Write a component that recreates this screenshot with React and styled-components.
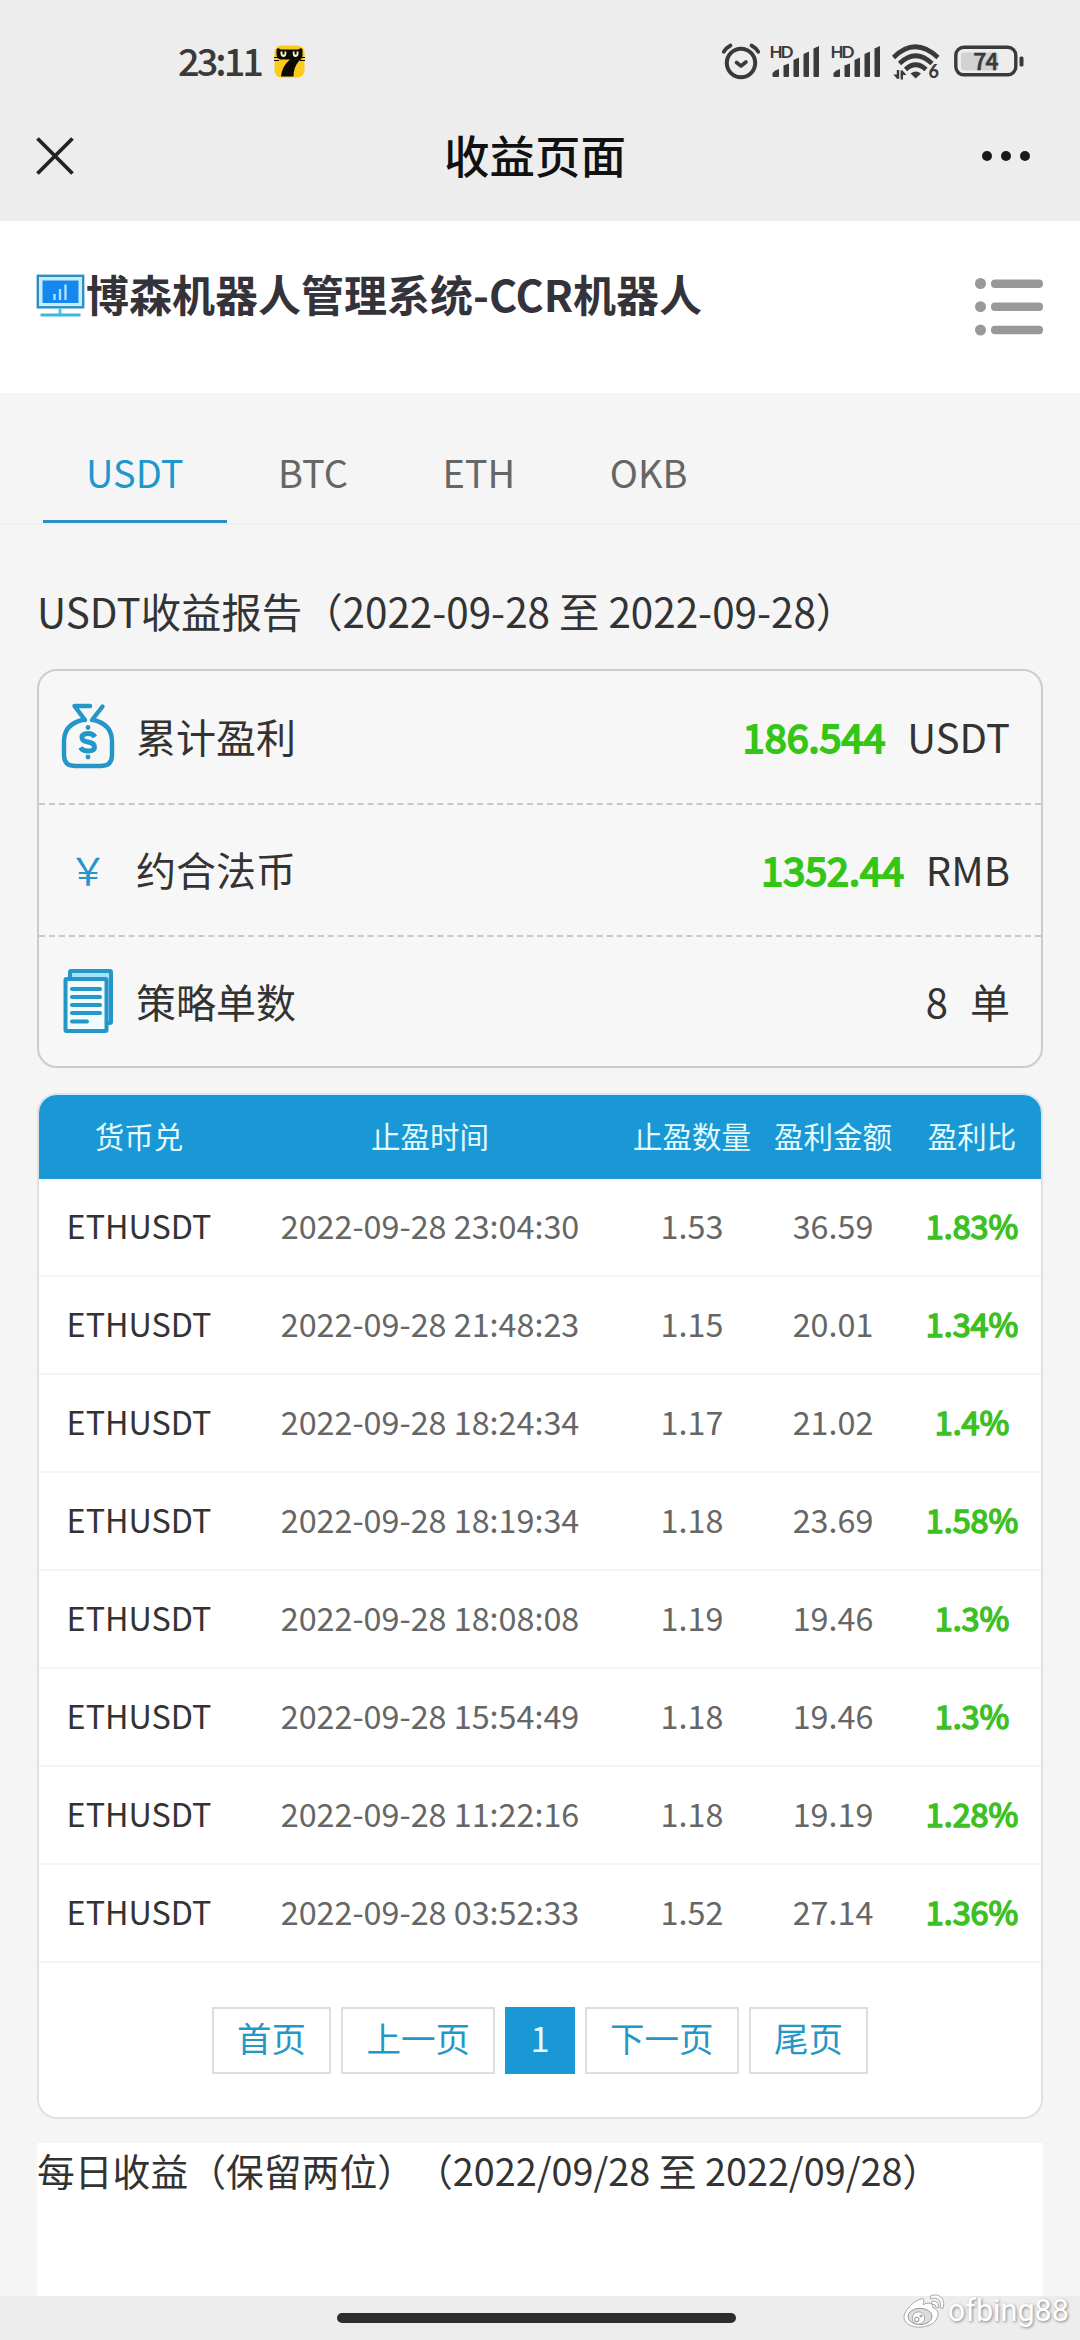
import React from 'react';
import styled, { createGlobalStyle } from 'styled-components';

const trades = [
    { pair: 'ETHUSDT', time: '2022-09-28 23:04:30', amount: '1.53', profit: '36.59', rate: '1.83%' },
    { pair: 'ETHUSDT', time: '2022-09-28 21:48:23', amount: '1.15', profit: '20.01', rate: '1.34%' },
    { pair: 'ETHUSDT', time: '2022-09-28 18:24:34', amount: '1.17', profit: '21.02', rate: '1.4%' },
    { pair: 'ETHUSDT', time: '2022-09-28 18:19:34', amount: '1.18', profit: '23.69', rate: '1.58%' },
    { pair: 'ETHUSDT', time: '2022-09-28 18:08:08', amount: '1.19', profit: '19.46', rate: '1.3%' },
    { pair: 'ETHUSDT', time: '2022-09-28 15:54:49', amount: '1.18', profit: '19.46', rate: '1.3%' },
    { pair: 'ETHUSDT', time: '2022-09-28 11:22:16', amount: '1.18', profit: '19.19', rate: '1.28%' },
    { pair: 'ETHUSDT', time: '2022-09-28 03:52:33', amount: '1.52', profit: '27.14', rate: '1.36%' },
];

const AppBadge = () => (
    <svg width="31" height="33" viewBox="0 0 31 33">
        <rect x="0.5" y="0.5" width="30" height="32" rx="7" fill="#fccb1a" />
        <path d="M2.5 4.5 L4 3 L7 4.5 H24 L27 3 L28.5 4.5 V11 Q28 14 25 16 Q19.5 22 19.5 31.5 H7 Q8 21 16 14.5 H6 Q2.5 13 2.5 9 Z" fill="#0c0a04" />
        <path d="M0 12.5 H4 M0 15.5 H5 M27 12.5 H31 M26 15.5 H31" stroke="#0c0a04" strokeWidth="1.2" />
        <path d="M6.5 6.5 V9 Q7 12 9.5 12 Q12 12 12.3 9 V6.5 M18.8 6.5 V9 Q19 12 21.5 12 Q24 12 24.5 9 V6.5" fill="#fff3c4" />
        <path d="M9.5 5.5 V9.5 M21.6 5.5 V9.5" stroke="#0c0a04" strokeWidth="2" />
    </svg>
);

const AlarmIcon = () => (
    <svg width="40" height="38" viewBox="0 0 40 38" fill="none" stroke="#3a3a3a" strokeLinecap="round">
        <circle cx="20" cy="21" r="14.2" strokeWidth="4" />
        <path d="M2.8 9.8 Q5.5 5.5 9.5 3.5 M37.2 9.8 Q34.5 5.5 30.5 3.5" strokeWidth="3.8" />
        <path d="M15.5 20.5 L20 24 L25 20" strokeWidth="3.6" strokeLinejoin="round" />
    </svg>
);

const SignalIcon = () => (
    <svg width="52" height="34" viewBox="0 0 52 34" fill="#3a3a3a">
        <text x="-0.5" y="13.5" fontFamily="Lato" fontWeight="bold" fontSize="17" textLength="24">HD</text>
        <path d="M2.5 32 V29 Q5 26 9 25 V32 Q9 33 8 33 H3.5 Q2.5 33 2.5 32 Z" />
        <path d="M13.5 21.5 L19 19.5 V32 Q19 33 18 33 H14.5 Q13.5 33 13.5 32 Z" />
        <path d="M23.5 16 L29 13.5 V32 Q29 33 28 33 H24.5 Q23.5 33 23.5 32 Z" />
        <path d="M33.5 10 L39 7.5 V32 Q39 33 38 33 H34.5 Q33.5 33 33.5 32 Z" />
        <path d="M43.5 4.5 L49 2 V32 Q49 33 48 33 H44.5 Q43.5 33 43.5 32 Z" />
    </svg>
);

const WifiIcon = () => (
    <svg width="48" height="37" viewBox="0 0 48 37" fill="none" stroke="#3a3a3a" strokeWidth="4.6">
        <path d="M1.5 14.5 Q23 -7 46 14.5" />
        <path d="M7.5 20.5 Q23.5 5 40 20.5" />
        <path d="M13.5 26.5 Q23.5 17 34 26.5" />
        <path d="M18.5 30.5 Q23.7 26.5 29 30.5 L23.7 35.5 Z" fill="#3a3a3a" stroke="none" />
        <path d="M6 27 V35.8 M9.8 36.5 V27.5" strokeWidth="2.4" />
        <path d="M1.2 31.5 H5.5 V36 Z M10.5 27.5 V32 H14.5 Z" fill="#3a3a3a" stroke="none" />
        <text x="36.5" y="35.3" fill="#3a3a3a" stroke="none" fontFamily="Lato" fontWeight="900" fontSize="18">6</text>
    </svg>
);

const BatteryIcon = () => (
    <svg width="71" height="32" viewBox="0 0 71 32">
        <rect x="7" y="7.5" width="37" height="18" rx="3" fill="#d2d2d2" />
        <rect x="1.8" y="2.3" width="60" height="27.5" rx="8" fill="none" stroke="#3a3a3a" strokeWidth="3.4" />
        <rect x="65.5" y="11.5" width="4" height="10" rx="1.5" fill="#3a3a3a" />
        <text x="31.5" y="24.5" textAnchor="middle" fontFamily="Noto Sans CJK SC" fontWeight="500" fontSize="23" letterSpacing="-0.8" fill="#3a3a3a" stroke="#3a3a3a" strokeWidth="0.6">74</text>
    </svg>
);

const CloseIcon = () => (
    <svg width="38" height="38" viewBox="0 0 38 38" stroke="#222" strokeWidth="3.8">
        <path d="M1.5 1.5 L36.5 36.5 M36.5 1.5 L1.5 36.5" />
    </svg>
);

const MonitorIcon = () => (
    <svg width="47" height="42" viewBox="0 0 47 42">
        <rect x="0.8" y="0.8" width="45.4" height="31.5" fill="#c9ecfb" stroke="#2f8dc4" strokeWidth="2.4" />
        <rect x="5.5" y="5.5" width="36" height="22.5" fill="#1487f0" />
        <path d="M17.5 19 V25 M23 14 V25 M28.5 9.5 V25" stroke="#a9e2ff" strokeWidth="2.4" />
        <path d="M23 33 V39" stroke="#53c8e8" strokeWidth="3" />
        <path d="M3.5 40 H43.5" stroke="#3fb6dc" strokeWidth="2.8" />
    </svg>
);

const MenuIcon = () => (
    <svg width="68" height="58" viewBox="0 0 68 58" fill="#999">
        <circle cx="5.5" cy="5.5" r="5.5" />
        <circle cx="5.5" cy="28.7" r="5.5" />
        <circle cx="5.5" cy="52" r="5.5" />
        <rect x="16" y="1.5" width="52" height="8.4" rx="4" />
        <rect x="16" y="24.6" width="52" height="8.4" rx="4" />
        <rect x="16" y="47.8" width="52" height="8.4" rx="4" />
    </svg>
);

const MoneyBagIcon = () => (
    <svg width="54" height="66" viewBox="0 0 54 66" fill="none" stroke="#2497c8" strokeWidth="4.4">
        <path d="M29 3 H13.5 L24 17 M41.5 3.5 L31 17" strokeLinecap="round" strokeLinejoin="round" />
        <path d="M23 16.5 Q3 21 3 38 V52 Q3 63 14 63 H40 Q51 63 51 52 V38 Q51 21 31 16.5" />
        <circle cx="27" cy="24.5" r="2.4" fill="#2497c8" stroke="none" />
        <circle cx="27" cy="54" r="2.4" fill="#2497c8" stroke="none" />
        <path d="M34 34 Q32 30.5 27 30.5 Q21 30.5 21 34.5 Q21 38 27 39 Q33.5 40 33.5 44 Q33.5 48 27 48 Q21.5 48 19.5 44.5" strokeWidth="5" />
    </svg>
);

const DocsIcon = () => (
    <svg width="50" height="66" viewBox="0 0 50 66" fill="none" stroke="#2497c8" strokeWidth="4">
        <rect x="7" y="3" width="41" height="52" rx="1" fill="#a5e3f9" />
        <rect x="2.5" y="11" width="41" height="52" rx="1" fill="#f1fbfe" />
        <path d="M9 21 H37 M9 29 H37 M9 37 H37 M9 45 H37 M9 53.5 H24" strokeWidth="4" strokeLinecap="round" />
    </svg>
);

const WeiboIcon = () => (
    <svg width="44" height="36" viewBox="0 0 44 36" fill="#fff" stroke="#a8a8a8" strokeWidth="1">
        <path d="M19 6 C22 4.5 22.5 8 21 11.5 C27 9 32 10 30.5 14.5 C36 16.5 38 21.5 34 27 C29 34 17 36 8.5 32.5 C0.5 29 0.5 22.5 5 16.5 C9.5 10.5 15 7 19 6 Z" />
        <ellipse cx="18" cy="23.5" rx="12" ry="8.2" fill="#ddd" stroke="#999" />
        <circle cx="16.5" cy="25" r="6.2" />
        <circle cx="14.8" cy="26.5" r="2.2" fill="none" stroke="#888" />
        <circle cx="19" cy="23" r="1" fill="none" stroke="#888" />
        <path d="M28 3.2 Q36 -0.5 40.5 6 Q43 10.5 41 15.5 L38 14.5 Q39.5 10.5 37.5 7.5 Q34 3.5 29 6 Z" />
        <path d="M29.5 9 Q34 7 36 10.5 Q37 13 36 15 L33.5 14 Q34.3 10.8 30.2 11.5 Z" />
    </svg>
);

const App = () => {
    return (
        <Page>
            <GlobalStyle />
            <StatusBar>
                <Clock>23:11</Clock>
                <AppBadge />
                <StatusIcons>
                    <AlarmIcon />
                    <SignalIcon />
                    <SignalIcon />
                    <WifiIcon />
                    <Battery>
                        <BatteryIcon />
                    </Battery>
                </StatusIcons>
            </StatusBar>
            <TitleBar>
                <CloseIcon />
                <PageTitle>收益页面</PageTitle>
                <MoreDots>
                    <Dot />
                    <Dot />
                    <Dot />
                </MoreDots>
            </TitleBar>
            <SiteHeader>
                <Brand>
                    <MonitorIcon />
                    <BrandName>博森机器人管理系统-CCR机器人</BrandName>
                </Brand>
                <MenuButton>
                    <MenuIcon />
                </MenuButton>
            </SiteHeader>
            <Tabs>
                <Tab $active>USDT</Tab>
                <Tab>BTC</Tab>
                <Tab>ETH</Tab>
                <Tab>OKB</Tab>
            </Tabs>
            <Content>
                <ReportTitle>USDT收益报告（2022-09-28 至 2022-09-28）</ReportTitle>
                <Summary>
                    <SummaryRow>
                        <SummaryIcon><MoneyBagIcon /></SummaryIcon>
                        <SummaryLabel>累计盈利</SummaryLabel>
                        <Gain>186.544</Gain>
                        <Unit>USDT</Unit>
                    </SummaryRow>
                    <SummaryRow>
                        <SummaryIcon>￥</SummaryIcon>
                        <SummaryLabel>约合法币</SummaryLabel>
                        <Gain>1352.44</Gain>
                        <Unit>RMB</Unit>
                    </SummaryRow>
                    <SummaryRow>
                        <SummaryIcon><DocsIcon /></SummaryIcon>
                        <SummaryLabel>策略单数</SummaryLabel>
                        <span>8</span>
                        <Unit>单</Unit>
                    </SummaryRow>
                </Summary>
                <TradeCard>
                    <TradeHead>
                        <span>货币兑</span>
                        <span>止盈时间</span>
                        <span>止盈数量</span>
                        <span>盈利金额</span>
                        <span>盈利比</span>
                    </TradeHead>
                    {trades.map((trade) => (
                        <TradeRow key={trade.time}>
                            <Pair>{trade.pair}</Pair>
                            <span>{trade.time}</span>
                            <span>{trade.amount}</span>
                            <span>{trade.profit}</span>
                            <Rate>{trade.rate}</Rate>
                        </TradeRow>
                    ))}
                    <Pagination>
                        <PageButton>首页</PageButton>
                        <PageButton>上一页</PageButton>
                        <PageButton $active>1</PageButton>
                        <PageButton>下一页</PageButton>
                        <PageButton>尾页</PageButton>
                    </Pagination>
                </TradeCard>
                <DailyCard>每日收益（保留两位）（2022/09/28 至 2022/09/28）</DailyCard>
            </Content>
            <BottomBar>
                <HomeIndicator />
                <Watermark>
                    <WeiboIcon />
                    <WatermarkName>ofbing88</WatermarkName>
                </Watermark>
            </BottomBar>
        </Page>
    );
};

const GlobalStyle = createGlobalStyle`
  * {
    box-sizing: border-box;
  }

  body {
    margin: 0;
    background-color: #f5f5f5;
    font-family: 'Noto Sans CJK SC', sans-serif;
    text-spacing-trim: space-all;
    color: #333;
  }

  svg {
    display: block;
    flex-shrink: 0;
    overflow: visible;
  }
`;

const Page = styled.div`
  display: flex;
  flex-direction: column;
  width: 1080px;
  height: 2340px;
  overflow: hidden;
  background-color: #f5f5f5;
`;

const StatusBar = styled.div`
  display: flex;
  align-items: center;
  height: 90px;
  padding: 32px 55px 0 178px;
  background-color: #ededed;
`;

const Clock = styled.div`
  width: 96px;
  padding-bottom: 2px;
  font-size: 38px;
  font-weight: 500;
  line-height: 56px;
  letter-spacing: -3px;
  color: #3a3a3a;
`;

const StatusIcons = styled.div`
  display: flex;
  align-items: center;
  gap: 9px;
  margin-left: auto;
`;

const Battery = styled.div`
  margin-left: 5px;
`;

const TitleBar = styled.div`
  display: flex;
  align-items: center;
  justify-content: space-between;
  height: 131px;
  padding: 0 50px 0 36px;
  background-color: #ededed;
`;

const PageTitle = styled.h1`
  margin: 0 0 0 14px;
  padding-bottom: 3px;
  font-size: 45.5px;
  font-weight: 500;
  line-height: 64px;
  color: #111;
`;

const MoreDots = styled.div`
  display: flex;
  gap: 9px;
`;

const Dot = styled.span`
  width: 10px;
  height: 10px;
  border-radius: 50%;
  background-color: #1a1a1a;
`;

const SiteHeader = styled.header`
  display: flex;
  align-items: flex-start;
  justify-content: space-between;
  height: 172px;
  padding: 54px 37px 0;
  background-color: #fff;
`;

const Brand = styled.div`
  display: flex;
  align-items: center;
  gap: 2px;
  height: 42px;
`;

const BrandName = styled.span`
  padding-bottom: 6px;
  font-size: 43px;
  font-weight: 700;
  color: #35333a;
  white-space: nowrap;
`;

const MenuButton = styled.div`
  padding-top: 3px;
`;

const Tabs = styled.nav`
  display: flex;
  gap: 8.5px;
  height: 132px;
  padding: 0 43px;
  border-bottom: 2px solid #efeff1;
`;

const Tab = styled.div`
  height: 130px;
  padding: 52px 43px 0;
  font-size: 38px;
  line-height: 54px;
  color: ${(props) => (props.$active ? '#1d97cd' : '#666')};
  border-bottom: 3px solid ${(props) => (props.$active ? '#2b93c2' : 'transparent')};
`;

const Content = styled.main`
  display: flex;
  flex-direction: column;
  flex: 1;
  padding: 0 37px;
`;

const ReportTitle = styled.h2`
  margin: 0;
  height: 144px;
  padding-top: 56px;
  font-size: 40.4px;
  font-weight: 400;
  line-height: 60px;
  white-space: nowrap;
`;

const Summary = styled.section`
  height: 399px;
  margin-bottom: 25px;
  border: 2px solid #ccc;
  border-radius: 20px;
  background-color: #f7f7f7;
`;

const SummaryRow = styled.div`
  display: flex;
  align-items: center;
  height: 132px;
  padding: 0 31px 2px 21px;
  font-size: 40px;
  line-height: 60px;

  & + & {
    border-top: 2px dashed #c8c8c8;
  }
`;

const SummaryIcon = styled.div`
  display: flex;
  justify-content: center;
  width: 56px;
  margin-right: 20px;
  font-size: 38px;
  color: #2497c8;
`;

const SummaryLabel = styled.span`
  flex: 1;
`;

const Gain = styled.span`
  font-size: 39.5px;
  color: #33c617;
  -webkit-text-stroke: 2px #33c617;
`;

const Unit = styled.span`
  margin-left: 22px;
`;

const TradeCard = styled.section`
  height: 1026px;
  margin-bottom: 24px;
  border: 2px solid #e0e0e0;
  border-top-color: #d3e8f5;
  border-radius: 20px;
  background-color: #fff;
  overflow: hidden;
`;

const tradeColumns = `
  display: grid;
  grid-template-columns: 200px 382px 142px 140px 1fr;
  align-items: center;
  text-align: center;
  white-space: nowrap;
`;

const TradeHead = styled.div`
  ${tradeColumns}
  height: 84px;
  padding-bottom: 4px;
  font-size: 29.5px;
  color: #e4fbff;
  background-color: #1998d5;
`;

const TradeRow = styled.div`
  ${tradeColumns}
  height: 98px;
  padding-bottom: 4px;
  font-size: 32.3px;
  color: #666;
  border-bottom: 2px solid #f4f4f4;
`;

const Pair = styled.span`
  color: #333;
`;

const Rate = styled.span`
  color: #3cc023;
  -webkit-text-stroke: 1.6px #3cc023;
`;

const Pagination = styled.div`
  display: flex;
  justify-content: center;
  gap: 10.5px;
  padding-top: 44px;
`;

const PageButton = styled.button`
  height: 67px;
  padding: 0 23px 6px;
  font-family: inherit;
  font-size: 34.5px;
  line-height: 57px;
  color: ${(props) => (props.$active ? '#e4fbff' : '#2497c8')};
  background-color: ${(props) => (props.$active ? '#1998d5' : '#fff')};
  border: 2px solid ${(props) => (props.$active ? '#1998d5' : '#dedede')};
`;

const DailyCard = styled.section`
  flex: 1;
  font-size: 37.8px;
  line-height: 54px;
  white-space: nowrap;
  background-color: #fff;
`;

const BottomBar = styled.footer`
  position: relative;
  display: flex;
  justify-content: center;
  height: 44px;
  padding-top: 17px;
  background-color: #ededed;
`;

const HomeIndicator = styled.div`
  width: 399px;
  height: 10px;
  margin-right: 7px;
  border-radius: 5px;
  background-color: #2d2d2d;
`;

const Watermark = styled.div`
  position: absolute;
  right: 11px;
  bottom: 11px;
  display: flex;
  align-items: center;
  gap: 2px;
`;

const WatermarkName = styled.span`
  font-family: Roboto, sans-serif;
  font-size: 30.6px;
  line-height: 36px;
  color: #fff;
  text-shadow: 1px 1px 3px rgba(0, 0, 0, 0.45);
`;

export default App;
